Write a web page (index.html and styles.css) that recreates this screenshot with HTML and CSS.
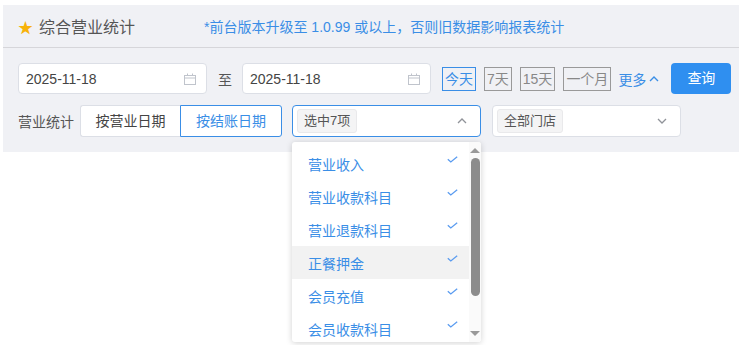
FILE: index.html
```html
<!DOCTYPE html>
<html>
<head>
<meta charset="utf-8">
<meta name="viewport" content="width=device-width, initial-scale=1.0" />
<link rel="stylesheet" href="styles.css">
</head>
<body>
<div class="panel">
  <div class="head">
    <span class="star">&#9733;</span>
    <span class="title">综合营业统计</span>
    <span class="note">*前台版本升级至 1.0.99 或以上，否则旧数据影响报表统计</span>
  </div>

  <div class="row">
    <div class="date">
      <span>2025-11-18</span>
      <svg class="cal" width="12" height="12" viewBox="0 0 12 12"><rect x="0.5" y="2.5" width="11" height="9" fill="none" stroke="#c0c4cc"/><line x1="0.5" y1="5" x2="11.5" y2="5" stroke="#c0c4cc"/><line x1="3.5" y1="0.5" x2="3.5" y2="3" stroke="#c0c4cc"/><line x1="8.5" y1="0.5" x2="8.5" y2="3" stroke="#c0c4cc"/></svg>
    </div>
    <span class="to">至</span>
    <div class="date">
      <span>2025-11-18</span>
      <svg class="cal" width="12" height="12" viewBox="0 0 12 12"><rect x="0.5" y="2.5" width="11" height="9" fill="none" stroke="#c0c4cc"/><line x1="0.5" y1="5" x2="11.5" y2="5" stroke="#c0c4cc"/><line x1="3.5" y1="0.5" x2="3.5" y2="3" stroke="#c0c4cc"/><line x1="8.5" y1="0.5" x2="8.5" y2="3" stroke="#c0c4cc"/></svg>
    </div>
    <div class="quick">
      <span class="qbtn on">今天</span>
      <span class="qbtn">7天</span>
      <span class="qbtn">15天</span>
      <span class="qbtn">一个月</span>
    </div>
    <span class="more">更多<svg width="10" height="6" viewBox="0 0 10 6"><polyline points="1,5 5,1 9,5" fill="none" stroke="#3a8ee6" stroke-width="1.4"/></svg></span>
    <span class="search">查询</span>
  </div>

  <div class="row row2">
    <span class="label">营业统计</span>
    <div class="seg">
      <span class="segbtn">按营业日期</span>
      <span class="segbtn on">按结账日期</span>
    </div>
    <div class="select focus">
      <span class="tag">选中7项</span>
      <svg class="arrow" width="10" height="6" viewBox="0 0 10 6"><polyline points="1,5 5,1 9,5" fill="none" stroke="#909399" stroke-width="1.3"/></svg>
      <div class="drop">
        <ul class="list">
          <li>营业收入<svg class="chk" width="11" height="7" viewBox="0 0 11 7"><polyline points="0.8,3.2 3.8,6 10.2,0.8" fill="none" stroke="#5b9cf0" stroke-width="1.3"/></svg></li>
          <li>营业收款科目<svg class="chk" width="11" height="7" viewBox="0 0 11 7"><polyline points="0.8,3.2 3.8,6 10.2,0.8" fill="none" stroke="#5b9cf0" stroke-width="1.3"/></svg></li>
          <li>营业退款科目<svg class="chk" width="11" height="7" viewBox="0 0 11 7"><polyline points="0.8,3.2 3.8,6 10.2,0.8" fill="none" stroke="#5b9cf0" stroke-width="1.3"/></svg></li>
          <li class="hover">正餐押金<svg class="chk" width="11" height="7" viewBox="0 0 11 7"><polyline points="0.8,3.2 3.8,6 10.2,0.8" fill="none" stroke="#5b9cf0" stroke-width="1.3"/></svg></li>
          <li>会员充值<svg class="chk" width="11" height="7" viewBox="0 0 11 7"><polyline points="0.8,3.2 3.8,6 10.2,0.8" fill="none" stroke="#5b9cf0" stroke-width="1.3"/></svg></li>
          <li>会员收款科目<svg class="chk" width="11" height="7" viewBox="0 0 11 7"><polyline points="0.8,3.2 3.8,6 10.2,0.8" fill="none" stroke="#5b9cf0" stroke-width="1.3"/></svg></li>
        </ul>
        <div class="bar">
          <span class="up"></span>
          <span class="thumb"></span>
          <span class="down"></span>
        </div>
      </div>
    </div>
    <div class="select">
      <span class="tag">全部门店</span>
      <svg class="arrow" width="10" height="6" viewBox="0 0 10 6"><polyline points="1,1 5,5 9,1" fill="none" stroke="#909399" stroke-width="1.3"/></svg>
    </div>
  </div>
</div>
<div class="content"></div>
</body>
</html>
```

FILE: styles.css
```css
html, body {
  min-height: 100%;
}

body {
  margin: 0;
  padding: 5px 0 0 3px;
  background: #fff;
  font-family: "Liberation Sans", "Noto Sans CJK SC", sans-serif;
  font-size: 13px;
  color: #333;
}

.panel {
  position: relative;
  z-index: 2;
  background: #f0f1f5;
  height: 147px;
}

.content {
  height: 193px;
  background: #fff;
}

.head {
  height: 42px;
  border-bottom: 1px solid #d6d6da;
  display: flex;
  align-items: center;
  padding-left: 15px;
}

.star {
  color: #f7b20a;
  font-size: 15px;
  margin-right: 6px;
}

.title {
  font-size: 16px;
  color: #555;
  margin-right: 69px;
}

.note {
  color: #3a8ee6;
  font-size: 14px;
}

.row {
  display: flex;
  align-items: center;
  padding: 15px 0 0 15px;
}

.row2 {
  padding-top: 11px;
}

.date {
  width: 189px;
  height: 31px;
  box-sizing: border-box;
  background: #fff;
  border: 1px solid #dcdfe6;
  border-radius: 4px;
  display: flex;
  align-items: center;
  justify-content: space-between;
  padding: 0 10px 0 7px;
  font-size: 14px;
  color: #444;
}

.to {
  font-size: 14px;
  color: #555;
  margin: 0 10px 0 11px;
}

.quick {
  display: flex;
  gap: 8px;
  margin-left: 11px;
}

.qbtn {
  height: 24px;
  box-sizing: border-box;
  border: 1px solid #999;
  color: #888;
  font-size: 14px;
  line-height: 22px;
  padding: 0 2px;
}

.qbtn.on {
  border-color: #3a8ee6;
  color: #3a8ee6;
}

.more {
  color: #3a8ee6;
  font-size: 14px;
  margin-left: 7px;
  display: flex;
  align-items: center;
  gap: 3px;
}

.search {
  margin-left: 12px;
  width: 60px;
  height: 31px;
  line-height: 31px;
  text-align: center;
  background: #2f8ff0;
  color: #fff;
  font-size: 14px;
  border-radius: 4px;
}

.label {
  color: #555;
  font-size: 14px;
  margin-right: 6px;
}

.seg {
  display: flex;
  margin-right: 10px;
}

.segbtn {
  width: 100px;
  height: 32px;
  box-sizing: border-box;
  background: #fff;
  border: 1px solid #dcdfe6;
  text-align: center;
  line-height: 30px;
  font-size: 14px;
  color: #444;
}

.segbtn:first-child {
  border-radius: 3px 0 0 3px;
  border-right: none;
}

.segbtn.on {
  width: 102px;
  border-color: #3a8ee6;
  color: #3a8ee6;
  border-radius: 0 3px 3px 0;
}

.select {
  position: relative;
  width: 189px;
  height: 32px;
  box-sizing: border-box;
  background: #fff;
  border: 1px solid #dcdfe6;
  border-radius: 4px;
  display: flex;
  align-items: center;
  justify-content: space-between;
  padding: 0 13px 0 4px;
  margin-right: 11px;
}

.select.focus {
  border-color: #3a8ee6;
}

.tag {
  background: #f4f4f5;
  border: 1px solid #e9e9eb;
  border-radius: 3px;
  height: 24px;
  line-height: 22px;
  box-sizing: border-box;
  padding: 0 6px;
  color: #555;
  font-size: 13px;
}

.drop {
  position: absolute;
  left: -1px;
  top: 36px;
  width: 189px;
  height: 200px;
  background: #fff;
  border-radius: 3px;
  box-shadow: 0 1px 6px rgba(0, 0, 0, 0.18);
  display: flex;
  overflow: hidden;
}

.list {
  list-style: none;
  margin: 0;
  padding: 5px 0 0;
  flex: 1;
}

.list li {
  height: 33px;
  display: flex;
  align-items: center;
  justify-content: space-between;
  padding: 0 11px 0 16px;
  color: #3a8ee6;
  font-size: 14px;
}

.list li.hover {
  background: #f2f2f2;
}

.chk {
  margin-top: -9px;
}

.bar {
  width: 12px;
  display: flex;
  flex-direction: column;
  align-items: center;
  background: #fafafa;
}

.up, .down {
  width: 0;
  height: 0;
  border-left: 5px solid transparent;
  border-right: 5px solid transparent;
}

.up {
  border-bottom: 5px solid #999;
  margin: 6px 0 5px;
}

.down {
  border-top: 5px solid #999;
  margin: auto 0 6px;
}

.thumb {
  width: 9px;
  height: 138px;
  background: #8c8c8c;
  border-radius: 5px;
}
```
